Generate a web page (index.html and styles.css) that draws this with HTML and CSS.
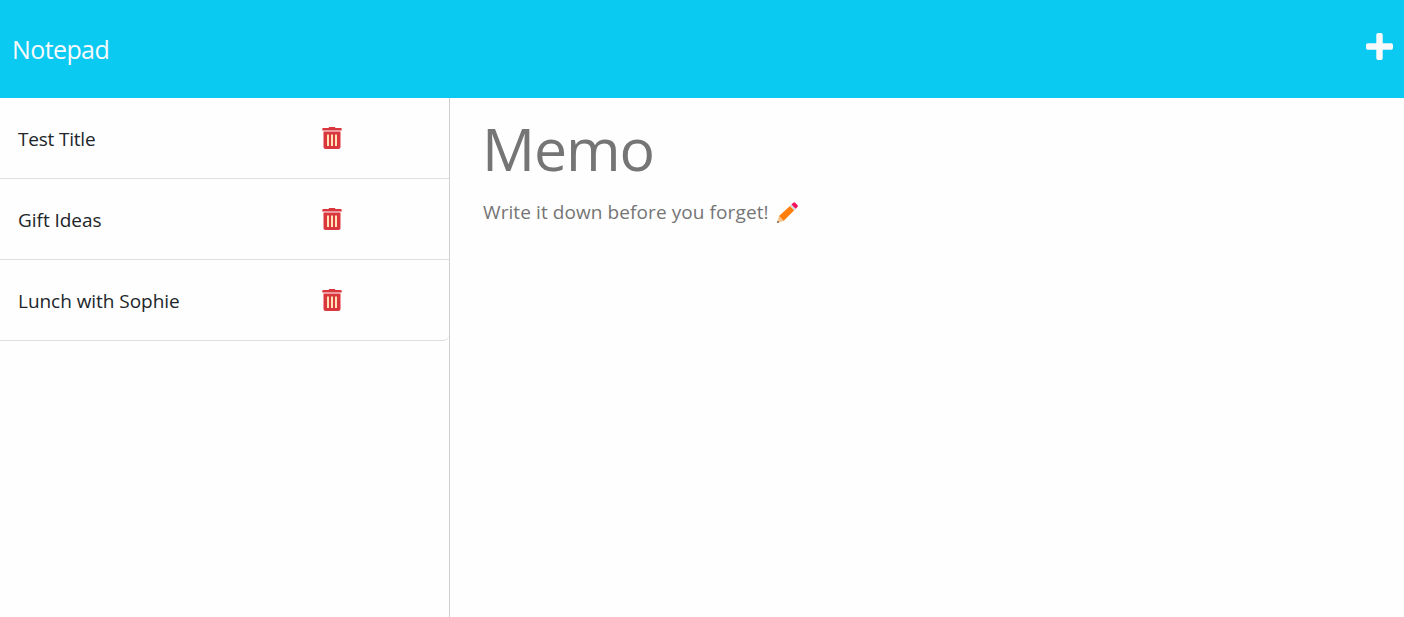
FILE: index.html
```html
<!DOCTYPE html>
<html lang="en">
<head>
<meta charset="utf-8">
<title>Notepad</title>
<link rel="stylesheet" href="styles.css">
</head>
<body>
<svg class="defs" aria-hidden="true">
  <symbol id="trash" viewBox="0 0 20 23">
    <path fill="#ffe3b5" d="M4.500 7h11v12.500h-11z"/>
    <path fill="#d9363e" fill-rule="evenodd" d="M1.300 1h5.200L7.200 0h5.600l.7 1h5.200q1 0 1 1v1.500H.3V2q0-1 1-1zM1.500 4.500h17V20q0 2-2 2h-13q-2 0-2-2zM5 7.500v11.500h2V7.500zM9 7.500v11.500h2V7.500zM13 7.500v11.500h2V7.500z"/>
  </symbol>
</svg>
<header class="navbar">
  <span class="brand">Notepad</span>
  <svg class="plus" viewBox="0 0 27 27"><path fill="#f8f9fa" d="M12 0h3q1.700 0 1.700 1.700v8.600h8.600q1.700 0 1.700 1.700v3q0 1.700-1.700 1.700h-8.600v8.600Q16.700 27 15 27h-3q-1.700 0-1.700-1.700v-8.600H1.700Q0 16.700 0 15v-3q0-1.700 1.700-1.700h8.600V1.700Q10.300 0 12 0z"/></svg>
</header>
<main class="layout">
  <aside class="sidebar">
    <ul class="notes">
      <li class="note"><span class="name tight">Test Title</span><svg class="trash"><use href="#trash"/></svg></li>
      <li class="note"><span class="name">Gift Ideas</span><svg class="trash"><use href="#trash"/></svg></li>
      <li class="note"><span class="name">Lunch with Sophie</span><svg class="trash"><use href="#trash"/></svg></li>
    </ul>
  </aside>
  <section class="editor">
    <h1 class="title">Memo</h1>
    <p class="text"><span>Write it down before you forget!</span>
      <svg class="pencil" viewBox="0 0 21 21"><path fill="#ff7d0a" d="M2 14 13.800 3.200l4.200 4.200L6.500 19z"/><path fill="#f7c48b" d="M2 14 6.500 19 0 21z"/><path fill="#444" d="M.7 18.800 2.300 20.300 0 21z"/><path fill="#d3dce0" d="M12.800 4.100 14.500 2.500l4.300 4.300-1.700 1.600z"/><path fill="#f5105c" d="M14.500 2.500 16.200.7q1-.9 2 0l2.200 2.200q.9 1 0 2l-1.800 1.900z"/></svg>
    </p>
  </section>
</main>
</body>
</html>
```
FILE: styles.css
```css
* { box-sizing: border-box; }
body {
  margin: 0;
  height: 100vh;
  display: flex;
  flex-direction: column;
  overflow: hidden;
  background: #fefefe;
  color: #212529;
  font: 19px/28px "Open Sans", "Noto Sans", sans-serif;
}
.defs { display: none; }
.navbar {
  height: 98px;
  flex: none;
  display: flex;
  align-items: center;
  justify-content: space-between;
  padding: 0 11px 0 12px;
  background: #0acaf2;
}
.brand { color: #f8f9fa; font-size: 25px; line-height: 36px; letter-spacing: -0.6px; }
.plus { width: 27px; height: 27px; margin-bottom: 5px; }
.layout { flex: 1; display: flex; }
.sidebar { width: 450px; border-right: 1px solid #cfcfcf; }
.notes { list-style: none; margin: 0; padding: 0; }
.note {
  height: 81px;
  display: flex;
  align-items: center;
  padding-left: 18px;
  border-bottom: 1px solid #dfdfdf;
}
.note:last-child { border-bottom-right-radius: 6px; }
.name { width: 304px; padding-top: 2px; letter-spacing: -0.04px; }
.tight { letter-spacing: -0.2px; }
.trash { width: 20px; height: 23px; margin-top: 1px; }
.editor { flex: 1; padding: 8px 0 0 33px; color: #757575; }
.title { margin: 0 0 0 -1px; font-size: 59px; line-height: 84px; font-weight: 400; letter-spacing: -1.100px; }
.text { margin: 8px 0 0; display: flex; align-items: center; gap: 8px; letter-spacing: 0.090px; }
.pencil { width: 21px; height: 21px; }
```
